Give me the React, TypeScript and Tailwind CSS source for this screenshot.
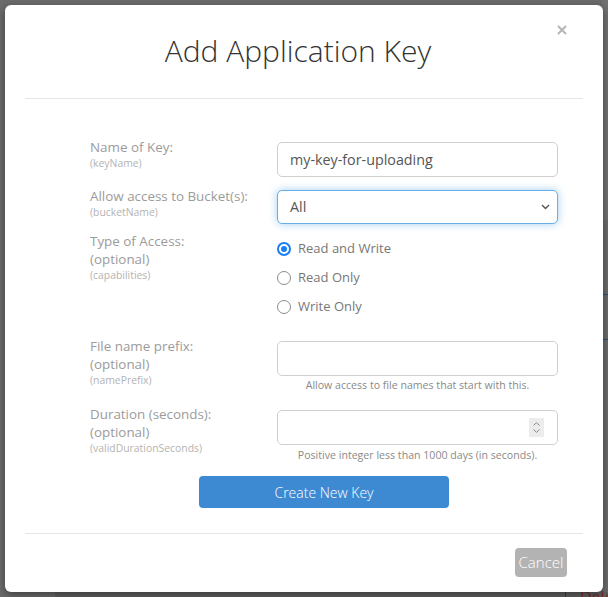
import React from "react";

const labelCls = "text-[13.4px] leading-[18px] text-[#9b9b9b]";
const subCls = "text-[10.4px] leading-[14px] text-[#b3b3b3]";
const inputCls =
  "h-[35px] w-[281px] rounded-[5px] border border-[#cfcfcf] bg-white px-[12px] text-[14.3px] text-[#555] flex items-center";

function FieldLabel({ lines, sub }: { lines: string[]; sub: string }) {
  return (
    <div className="w-[187px] shrink-0">
      {lines.map((l) => (
        <div key={l} className={labelCls}>
          {l}
        </div>
      ))}
      <div className={subCls}>{sub}</div>
    </div>
  );
}

function Radio({ label, checked }: { label: string; checked?: boolean }) {
  return (
    <div className="flex h-[29px] items-center gap-[7px]">
      {checked ? (
        <span className="flex h-[14px] w-[14px] items-center justify-center rounded-full border-[2px] border-[#1a7ff5] bg-white">
          <span className="h-[6px] w-[6px] rounded-full bg-[#1a7ff5]" />
        </span>
      ) : (
        <span className="h-[14px] w-[14px] rounded-full border-[1.5px] border-[#8b8b8b] bg-white" />
      )}
      <span className="text-[13px] text-[#777]">{label}</span>
    </div>
  );
}

export default function App() {
  return (
    <div
      className="relative h-[597px] w-[608px] overflow-hidden bg-[#6b6b6b]"
      style={{ fontFamily: '"Open Sans", "Liberation Sans", sans-serif' }}
    >
      {/* page behind the overlay */}
      <div className="absolute right-0 top-0 h-[220px] w-[6px] bg-[#717171]" />
      <div className="absolute right-0 top-[294px] h-[1px] w-[6px] bg-[#2d4d74]" />
      <div className="absolute right-0 top-[339px] h-[1px] w-[6px] bg-[#2d4d74]" />
      <div className="absolute bottom-0 left-[55px] h-[5px] w-[553px] bg-[#606060]" />
      <div className="absolute bottom-0 left-[565px] h-[7px] w-[1px] bg-[#6b2a2a]" />
      <div className="absolute bottom-[-12px] left-[580px] text-[16px] text-[#7a2a2a]">Dele</div>

      {/* modal */}
      <div className="absolute left-[5px] top-[5px] flex h-[587px] w-[598px] flex-col rounded-[6px] bg-white shadow-[0_3px_9px_rgba(0,0,0,0.4)]">
        <div className="relative mx-[20px] h-[94px] border-b border-[#e5e5e5] pr-[12px] pt-[26px] text-center">
          <h1 className="text-[30px] font-light leading-[40px] text-[#333]">Add Application Key</h1>
          <svg
            className="absolute right-[16px] top-[20px]"
            width="10"
            height="10"
            viewBox="0 0 10 10"
          >
            <path d="M1 1L9 9M9 1L1 9" stroke="#b5b5b5" strokeWidth="2" />
          </svg>
        </div>

        <div className="flex-1 pl-[85px]">
          <div className="mt-[39px] flex items-start">
            <FieldLabel lines={["Name of Key:"]} sub="(keyName)" />
            <div className={`${inputCls} mt-[4px]`}>my-key-for-uploading</div>
          </div>

          <div className="mt-[10px] flex items-start">
            <FieldLabel lines={["Allow access to Bucket(s):"]} sub="(bucketName)" />
            <div className="mt-[3px] flex h-[34px] w-[281px] items-center justify-between rounded-[5px] border border-[#66afe9] bg-white pl-[12px] pr-[7px] text-[14.3px] text-[#555] shadow-[0_0_8px_rgba(102,175,233,0.6)]">
              <span>All</span>
              <svg width="9" height="6" viewBox="0 0 9 6">
                <path d="M1 1L4.5 4.5L8 1" stroke="#555" strokeWidth="1.4" fill="none" />
              </svg>
            </div>
          </div>

          <div className="mt-[8px] flex items-start">
            <FieldLabel lines={["Type of Access:", "(optional)"]} sub="(capabilities)" />
            <div className="mt-[2px]">
              <Radio label="Read and Write" checked />
              <Radio label="Read Only" />
              <Radio label="Write Only" />
            </div>
          </div>

          <div className="mt-[16px] flex items-start">
            <FieldLabel lines={["File name prefix:", "(optional)"]} sub="(namePrefix)" />
            <div className="mt-[4px] w-[281px]">
              <div className={inputCls} />
              <div className="mt-[2px] text-center text-[10.6px] leading-[14px] text-[#8a8a8a]">
                Allow access to file names that start with this.
              </div>
            </div>
          </div>

          <div className="mt-[13px] flex items-start">
            <FieldLabel lines={["Duration (seconds):", "(optional)"]} sub="(validDurationSeconds)" />
            <div className="mt-[5px] w-[281px]">
              <div className={`${inputCls} justify-end pr-[13px]`}>
                <div className="flex h-[19px] w-[15px] flex-col items-center justify-center gap-[3px] bg-[#ececec]">
                  <svg width="7" height="4" viewBox="0 0 7 4">
                    <path d="M0.5 3.5L3.5 0.7L6.5 3.5" stroke="#888" strokeWidth="1" fill="none" />
                  </svg>
                  <svg width="7" height="4" viewBox="0 0 7 4">
                    <path d="M0.5 0.5L3.5 3.3L6.5 0.5" stroke="#888" strokeWidth="1" fill="none" />
                  </svg>
                </div>
              </div>
              <div className="mt-[3px] text-center text-[10.6px] leading-[14px] text-[#8a8a8a]">
                Positive integer less than 1000 days (in seconds).
              </div>
            </div>
          </div>

          <div className="mt-[14px] flex w-[468px] justify-center">
            <button className="h-[32px] w-[250px] rounded-[4px] bg-[#3d8ad3] text-[14px] font-light text-white">
              Create New Key
            </button>
          </div>
        </div>

        <div className="mx-[20px] flex h-[59px] items-start justify-end border-t border-[#e5e5e5] pr-[16px] pt-[14px]">
          <button className="h-[29px] w-[52px] rounded-[4px] bg-[#b3b3b3] text-[15px] font-light text-white">
            Cancel
          </button>
        </div>
      </div>
    </div>
  );
}
